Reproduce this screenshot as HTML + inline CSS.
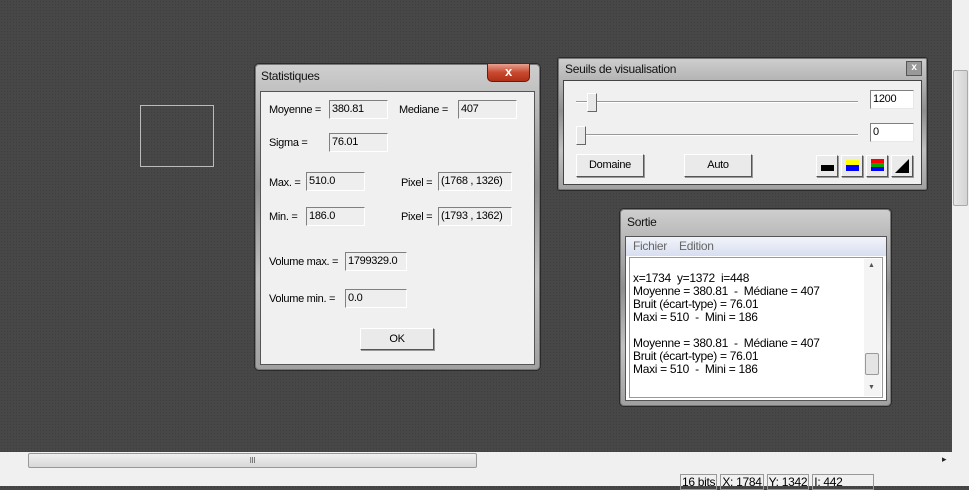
<!DOCTYPE html>
<html><head><style>
*{box-sizing:border-box;margin:0;padding:0}
body{width:969px;height:486px;overflow:hidden;background:#474747;background-image:radial-gradient(#3e3e3e 0.6px,transparent 0.8px);background-size:3px 3px;font-family:"Liberation Sans",sans-serif;font-size:11px;color:#000;position:relative;letter-spacing:-0.3px}
.a{position:absolute}
.frame{position:absolute;border:1px solid #2a2a2a;border-radius:5px;background:linear-gradient(#cfcfcf,#8f8f8f 40%,#c0c0c0 70%,#a0a0a0);box-shadow:0 0 0 1px #777 inset}
.title{position:absolute;left:7px;top:5px;font-size:12px;color:#111}
.client{position:absolute;background:#f0f0f0;border:1px solid #555}
.field{position:absolute;height:19px;background:#eeeeee;border:1px solid;border-color:#808080 #fff #fff #808080;padding:2px 2px 0;font-size:11px}
.lbl{position:absolute;font-size:11px}
.btn{position:absolute;background:#eaeaea;border:1px solid;border-color:#fff #555 #555 #fff;box-shadow:1px 1px 0 #999;text-align:center;font-size:11px}
.wf{position:absolute;height:19px;background:#fff;border:1px solid;border-color:#808080 #e8e8e8 #e8e8e8 #808080;padding:2px 2px 0;font-size:11px}
</style></head><body>
<div class="a" style="left:140px;top:105px;width:74px;height:62px;border:1px solid #bbb"></div>

<div class="frame" style="left:254px;top:63px;width:287px;height:308px"></div>
<div class="title" style="left:261px;top:69px">Statistiques</div>
<div class="a" style="left:487px;top:63px;width:43px;height:19px;border:1px solid #6a1a10;border-radius:0 0 5px 5px;background:linear-gradient(#e8a090,#c84a30 50%,#b03018);color:#fff;font-weight:bold;text-align:center;font-size:13px;line-height:16px">x</div>
<div class="client" style="left:260px;top:91px;width:275px;height:274px"></div>
<div class="lbl" style="left:269px;top:104px">Moyenne =</div><div class="field" style="left:329px;top:100px;width:59px">380.81</div>
<div class="lbl" style="left:399px;top:104px">Mediane =</div><div class="field" style="left:458px;top:100px;width:59px">407</div>
<div class="lbl" style="left:269px;top:137px">Sigma =</div><div class="field" style="left:329px;top:133px;width:59px">76.01</div>
<div class="lbl" style="left:269px;top:177px">Max. =</div><div class="field" style="left:306px;top:172px;width:59px">510.0</div>
<div class="lbl" style="left:401px;top:177px">Pixel =</div><div class="field" style="left:438px;top:172px;width:74px">(1768 , 1326)</div>
<div class="lbl" style="left:269px;top:211px">Min. =</div><div class="field" style="left:306px;top:207px;width:59px">186.0</div>
<div class="lbl" style="left:401px;top:211px">Pixel =</div><div class="field" style="left:438px;top:207px;width:74px">(1793 , 1362)</div>
<div class="lbl" style="left:269px;top:256px">Volume max. =</div><div class="field" style="left:345px;top:252px;width:62px">1799329.0</div>
<div class="lbl" style="left:269px;top:293px">Volume min. =</div><div class="field" style="left:345px;top:289px;width:62px">0.0</div>
<div class="btn" style="left:360px;top:328px;width:74px;height:22px;line-height:20px">OK</div>

<div class="frame" style="left:557px;top:57px;width:371px;height:134px;border-radius:3px"></div>
<div class="title" style="left:565px;top:62px">Seuils de visualisation</div>
<div class="a" style="left:906px;top:61px;width:16px;height:15px;background:#999;border:1px solid #555;color:#fff;font-size:10px;text-align:center;line-height:12px;font-weight:bold">x</div>
<div class="client" style="left:563px;top:80px;width:359px;height:105px;border-color:#444"></div>
<div class="a" style="left:576px;top:101px;width:282px;height:2px;border-top:1px solid #999;border-bottom:1px solid #fff"></div>
<div class="a" style="left:587px;top:93px;width:10px;height:19px;background:#e8e8e8;border:1px solid;border-color:#fff #666 #666 #fff"></div>
<div class="a" style="left:576px;top:134px;width:282px;height:2px;border-top:1px solid #999;border-bottom:1px solid #fff"></div>
<div class="a" style="left:576px;top:126px;width:10px;height:19px;background:#e8e8e8;border:1px solid;border-color:#fff #666 #666 #fff"></div>
<div class="wf" style="left:870px;top:90px;width:44px">1200</div>
<div class="wf" style="left:870px;top:123px;width:44px">0</div>
<div class="btn" style="left:576px;top:154px;width:68px;height:23px;line-height:21px">Domaine</div>
<div class="btn" style="left:684px;top:154px;width:68px;height:23px;line-height:21px">Auto</div>
<div class="btn" style="left:816px;top:155px;width:22px;height:22px"><div class="a" style="left:4px;top:9px;width:13px;height:6px;background:#000"></div></div>
<div class="btn" style="left:841px;top:155px;width:22px;height:22px"><div class="a" style="left:4px;top:4px;width:13px;height:5px;background:#ff0"></div><div class="a" style="left:4px;top:9px;width:13px;height:6px;background:#00f"></div></div>
<div class="btn" style="left:866px;top:155px;width:22px;height:22px"><div class="a" style="left:4px;top:3px;width:13px;height:4px;background:#f00"></div><div class="a" style="left:4px;top:7px;width:13px;height:4px;background:#0a0"></div><div class="a" style="left:4px;top:11px;width:13px;height:4px;background:#00f"></div></div>
<div class="btn" style="left:891px;top:155px;width:22px;height:22px"><svg class="a" style="left:2px;top:2px" width="16" height="16"><path d="M1 15 L15 1 L15 15Z" fill="#000"/></svg></div>

<div class="frame" style="left:619px;top:208px;width:273px;height:199px"></div>
<div class="title" style="left:627px;top:215px">Sortie</div>
<div class="a" style="left:625px;top:236px;width:262px;height:165px;border:1px solid #555;background:#fff"></div>
<div class="a" style="left:626px;top:237px;width:260px;height:19px;background:linear-gradient(#f2f4fa,#d8def0);color:#666;font-size:12px;padding:2px 7px">Fichier&nbsp;&nbsp;&nbsp; Edition</div>
<div class="a" style="left:629px;top:257px;width:254px;height:141px;border:1px solid #999;background:#fff"></div>
<div class="a" style="left:633px;top:272px;font-size:12px;line-height:13px;white-space:pre">x=1734  y=1372  i=448
Moyenne = 380.81  -  Médiane = 407
Bruit (écart-type) = 76.01
Maxi = 510  -  Mini = 186

Moyenne = 380.81  -  Médiane = 407
Bruit (écart-type) = 76.01
Maxi = 510  -  Mini = 186</div>
<div class="a" style="left:864px;top:259px;width:17px;height:137px;background:#f4f4f4"></div>
<div class="a" style="left:868px;top:262px;font-size:7px;color:#555">▲</div>
<div class="a" style="left:868px;top:384px;font-size:7px;color:#555">▼</div>
<div class="a" style="left:865px;top:353px;width:14px;height:22px;background:#e4e4e4;border:1px solid #999;border-radius:2px"></div>

<div class="a" style="left:952px;top:0;width:17px;height:452px;background:#f0f0f0"></div>
<div class="a" style="left:953px;top:70px;width:15px;height:136px;background:linear-gradient(90deg,#e8e8e8,#d4d4d4);border:1px solid #aaa;border-radius:2px"></div>
<div class="a" style="left:0;top:452px;width:952px;height:18px;background:#f0f0f0"></div>
<div class="a" style="left:952px;top:452px;width:17px;height:18px;background:#f0f0f0"></div>
<div class="a" style="left:28px;top:453px;width:449px;height:15px;background:linear-gradient(#f0f0f0,#d8d8d8);border:1px solid #999;border-radius:2px;text-align:center;font-size:8px;line-height:13px;color:#555">III</div>
<div class="a" style="left:942px;top:454px;font-size:9px;color:#222">▸</div>
<div class="a" style="left:0;top:470px;width:969px;height:16px;background:#f0f0f0"></div>
<div class="a" style="left:680px;top:476px;font-size:12px;white-space:nowrap;line-height:12px"><span style="border:1px solid #999;padding:0 1px">16 bits</span> <span style="border:1px solid #999;padding:0 1px">X: 1784</span> <span style="border:1px solid #999;padding:0 1px">Y: 1342</span> <span style="border:1px solid #999;padding:0 30px 0 1px">I: 442</span></div>
</body></html>
